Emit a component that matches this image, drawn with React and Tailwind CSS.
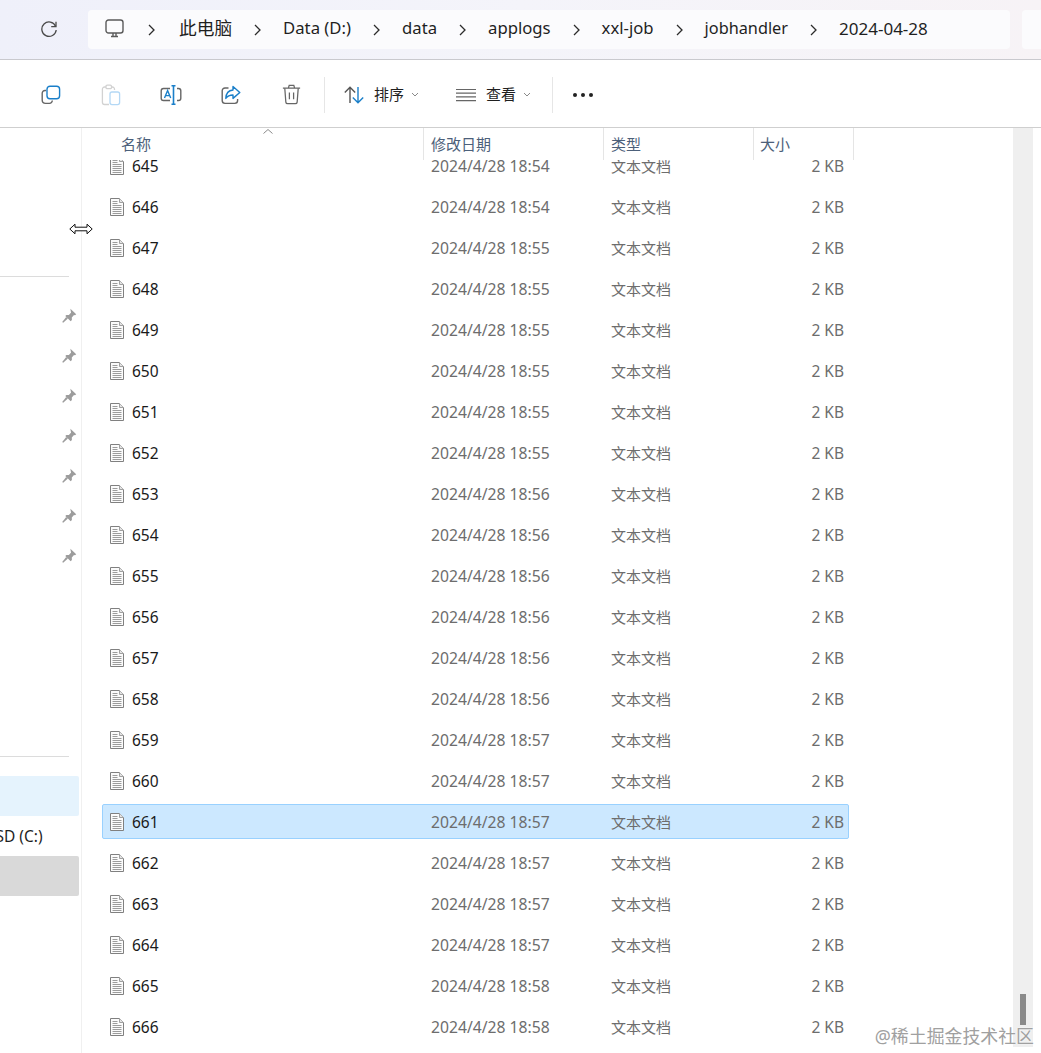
import React from "react";

const crumbs = ["此电脑", "Data (D:)", "data", "applogs", "xxl-job", "jobhandler", "2024-04-28"];

// name range -> time
function timeFor(n) {
  if (n <= 646) return "18:54";
  if (n <= 652) return "18:55";
  if (n <= 658) return "18:56";
  if (n <= 664) return "18:57";
  return "18:58";
}

const rows = [];
for (let n = 645; n <= 666; n++) rows.push(n);

const pins = [0, 1, 2, 3, 4, 5, 6];

function Chevron() {
  return (
    <svg width="7" height="12" viewBox="0 0 7 12" fill="none" stroke="#2b2b2b" strokeWidth="1.3" className="shrink-0">
      <path d="M1 1l5 5-5 5" />
    </svg>
  );
}

function SmallChevron() {
  return (
    <svg width="8" height="5" viewBox="0 0 8 5" fill="none" stroke="#8a8a8a" strokeWidth="1">
      <path d="M1 1l3 3 3-3" />
    </svg>
  );
}

function DocIcon() {
  return (
    <svg width="14" height="18" viewBox="0 0 14 18" fill="none" className="shrink-0">
      <path d="M.5.5h9l4 4v13H.5z" fill="#fbfbfb" stroke="#808080" />
      <path d="M9.5.5v4h4" fill="#e4e4e4" stroke="#a0a0a0" />
      <path d="M2.5 3.5h5M2.5 5.5h5M2.5 7.5h9M2.5 9.5h9M2.5 11.5h9M2.5 13.5h9M2.5 15.5h9" stroke="#9c9c9c" />
    </svg>
  );
}

function PinIcon() {
  return (
    <svg width="16" height="16" viewBox="0 0 16 16" fill="#9c9c9c">
      <path d="M9.4.8l5.8 5.4-1.2 1.1-1-.3-2.2 2.6.1 2.4-1.2 1.2-5.4-5.1 1.1-1.2 2.5.1 2.2-2.6-.4-1.3z" />
      <path d="M5.2 9l1.7 1.6-4.7 4.2-1-.9z" />
    </svg>
  );
}

function ToolBtn({ children }) {
  return <div className="w-[60px] h-full flex items-center justify-center shrink-0">{children}</div>;
}

function Header() {
  const cell = "h-full flex items-center border-r border-[#e5e5e5] text-[15px] text-[#4c607a] shrink-0";
  return (
    <div className="h-[32px] flex shrink-0">
      <div className={`${cell} w-[342px] pl-[39px] relative`}>
        名称
        <svg width="10" height="5" viewBox="0 0 10 5" fill="none" stroke="#8a8a8a" className="absolute left-[181px] top-[1px]">
          <path d="M.5 4.5L5 .5l4.5 4" />
        </svg>
      </div>
      <div className={`${cell} w-[180px] pl-[7px]`}>修改日期</div>
      <div className={`${cell} w-[150px] pl-[7px]`}>类型</div>
      <div className={`${cell} w-[100px] pl-[6px]`}>大小</div>
    </div>
  );
}

function Row({ n }) {
  const selected = n === 661;
  return (
    <div
      className={`w-[747px] h-[35px] mb-[6px] shrink-0 flex items-center border rounded-[2px] ${
        selected ? "bg-[#cce8ff] border-[#99d1ff]" : "border-transparent"
      }`}
    >
      <div className="w-[328px] flex items-center shrink-0 pl-[7px] gap-[8px] text-[#1a1a1a]">
        <DocIcon />
        <span className="text-[15.5px] pt-[2px]">{n}</span>
      </div>
      <div className="w-[180px] shrink-0 pt-[2px] text-[15.7px] text-[#6d6d6d]">2024/4/28 {timeFor(n)}</div>
      <div className="w-[150px] shrink-0 pt-[2px] text-[15px] text-[#6d6d6d]">文本文档</div>
      <div className="flex-1 text-right pt-[2px] pr-[4px] text-[15.5px] text-[#6d6d6d]">2 KB</div>
    </div>
  );
}

export default function App() {
  return (
    <div
      className="relative w-[1041px] h-[1053px] overflow-hidden bg-white flex flex-col"
      style={{ fontFamily: '"Noto Sans", "Noto Sans CJK SC", sans-serif' }}
    >
      {/* Address bar */}
      <div className="h-[60px] shrink-0 flex items-center border-b border-[#c9c9ce] bg-gradient-to-r from-[#eff0fa] via-[#f4f4fa] to-[#f7f3f6]">
        <div className="w-[88px] shrink-0 flex justify-center pl-[10px] pb-[2px]">
          <svg width="18" height="18" viewBox="0 0 18 18" fill="none" stroke="#4a4a4a" strokeWidth="1.3">
            <path d="M15.6 6.2A7.2 7.2 0 1 0 16.2 10" />
            <path d="M16 1.8v4.8h-4.8" />
          </svg>
        </div>
        <div className="w-[922px] h-[39px] shrink-0 rounded-[4px] bg-[#fbfbfd] flex items-center pl-[17px] gap-[22px] text-[#1f1f1f]">
          <svg width="19" height="19" viewBox="0 0 19 19" fill="none" stroke="#5a5a5a" strokeWidth="1.4" className="shrink-0 mr-[2px] mb-[2px]">
            <rect x="1" y="1" width="17" height="13" rx="2.5" />
            <path d="M6 17.5h7M8 14v3M11 14v3" />
          </svg>
          {crumbs.map((c, i) => (
            <React.Fragment key={c}>
              <Chevron />
              <span
                className={`leading-none whitespace-nowrap pb-[2px] ${
                  i === 0 ? "text-[17.7px] ml-[2px]" : i === 6 ? "text-[17px]" : i === 5 ? "text-[16.3px]" : "text-[16.7px]"
                }`}
              >
                {c}
              </span>
            </React.Fragment>
          ))}
        </div>
        <div className="ml-[12px] flex-1 h-[39px] rounded-l-[4px] bg-[#fbfbfd]" />
      </div>

      {/* Command bar */}
      <div className="h-[68px] shrink-0 flex items-center border-b border-[#cfcfcf] pl-[21px] pt-[2px]">
        <ToolBtn>
          <svg width="20" height="20" viewBox="0 0 20 20" fill="none" strokeWidth="1.4">
            <path d="M5.2 5.5H4A2.8 2.8 0 0 0 1.2 8.3V15A3.4 3.4 0 0 0 4.6 18.4H8.5A2.8 2.8 0 0 0 11.3 15.6" stroke="#666" />
            <rect x="6" y="1.2" width="12.6" height="12.6" rx="3" stroke="#1a7fc9" />
          </svg>
        </ToolBtn>
        <ToolBtn>
          <svg width="20" height="22" viewBox="0 0 20 22" fill="none" strokeWidth="1.3">
            <path d="M5 3H3.6A2.2 2.2 0 0 0 1.4 5.2V18.3A2.2 2.2 0 0 0 3.6 20.5H8M13.5 6V5.2A2.2 2.2 0 0 0 11.3 3H10" stroke="#d2d2d2" />
            <rect x="5" y="1.2" width="5.5" height="3.4" rx="1.2" stroke="#d2d2d2" />
            <rect x="9" y="8" width="9.6" height="12.6" rx="2" stroke="#b4d8f5" />
          </svg>
        </ToolBtn>
        <ToolBtn>
          <svg width="22" height="20" viewBox="0 0 22 20" fill="none" strokeWidth="1.4">
            <path d="M10 3.5H3.5A2.3 2.3 0 0 0 1.2 5.8V13.2A2.3 2.3 0 0 0 3.5 15.5H10M17 3.5H18.5A2.3 2.3 0 0 1 20.8 5.8V13.2A2.3 2.3 0 0 1 18.5 15.5H17" stroke="#666" />
            <path d="M4.5 13L7.6 5.5 10.7 13M5.6 10.6h4.2" stroke="#1a7fc9" />
            <path d="M13.5 .8V19.2M11.5 .8h4M11.5 19.2h4" stroke="#1a7fc9" strokeWidth="1.6" />
          </svg>
        </ToolBtn>
        <ToolBtn>
          <svg width="20" height="20" viewBox="0 0 20 20" fill="none" strokeWidth="1.4">
            <path d="M7.5 3H4A2.8 2.8 0 0 0 1.2 5.8V15.6A2.8 2.8 0 0 0 4 18.4H13.8A2.8 2.8 0 0 0 16.6 15.6V14" stroke="#666" />
            <path d="M12 1.4L18.8 7.5 12 13.4V10C9 10 6.6 10.8 4.8 13.4 5 8.6 7.6 5.4 12 5z" stroke="#1a7fc9" strokeLinejoin="round" />
          </svg>
        </ToolBtn>
        <ToolBtn>
          <svg width="19" height="21" viewBox="0 0 18 20" fill="none" stroke="#666" strokeWidth="1.2">
            <path d="M.8 4h16.4M6 4L6.8 1.2h4.4L12 4" />
            <path d="M2.6 4l1 13.2a1.8 1.8 0 0 0 1.8 1.6h7.2a1.8 1.8 0 0 0 1.8-1.6l1-13.2" />
            <path d="M7 8v6.5M11 8v6.5" />
          </svg>
        </ToolBtn>
        <div className="w-px h-[36px] bg-[#e6e6e6] ml-[3px] shrink-0" />
        <div className="ml-[19px] flex items-center shrink-0">
          <svg width="20" height="18" viewBox="0 0 20 18" fill="none" strokeWidth="1.4" className="shrink-0">
            <path d="M6 17V1.5M.8 6.5L6 1.3l5.2 5.2" stroke="#555" />
            <path d="M14 1v15.5M8.8 11.5L14 16.7l5.2-5.2" stroke="#1a7fc9" />
          </svg>
          <span className="ml-[10px] text-[15px] text-[#1f1f1f] leading-none">排序</span>
          <span className="ml-[7px] flex"><SmallChevron /></span>
        </div>
        <div className="ml-[37px] flex items-center shrink-0">
          <svg width="20" height="14" viewBox="0 0 20 14" fill="none" stroke="#666" strokeWidth="1.2" className="shrink-0">
            <path d="M0 1.5h20M0 5.2h20M0 8.9h20M0 12.6h20" />
          </svg>
          <span className="ml-[10px] text-[15px] text-[#1f1f1f] leading-none">查看</span>
          <span className="ml-[7px] flex"><SmallChevron /></span>
        </div>
        <div className="w-px h-[36px] bg-[#e6e6e6] ml-[21px] shrink-0" />
        <div className="ml-[20px] flex gap-[4px] shrink-0">
          <span className="w-[4px] h-[4px] rounded-full bg-[#222]" />
          <span className="w-[4px] h-[4px] rounded-full bg-[#222]" />
          <span className="w-[4px] h-[4px] rounded-full bg-[#222]" />
        </div>
      </div>

      {/* Body */}
      <div className="flex-1 min-h-0 flex">
        {/* Nav pane */}
        <aside className="w-[82px] shrink-0 border-r border-[#f0f0f0] flex flex-col overflow-hidden">
          <div className="h-px w-[69px] bg-[#dcdcdc] mt-[148px] mb-[19px] shrink-0" />
          {pins.map(p => (
            <div key={p} className="h-[40px] w-[77px] shrink-0 flex items-center justify-end">
              <PinIcon />
            </div>
          ))}
          <div className="h-px w-[69px] bg-[#dcdcdc] mt-[180px] mb-[19px] shrink-0" />
          <div className="h-[40px] w-[79px] shrink-0 bg-[#e5f3fd] rounded-r-[2px]" />
          <div className="h-[40px] w-[79px] shrink-0 flex items-center pt-[2px] text-[15.5px] text-[#1f1f1f] whitespace-nowrap">
            <span className="-ml-[13px]">SSD (C:)</span>
          </div>
          <div className="h-[40px] w-[79px] shrink-0 bg-[#d9d9d9] rounded-r-[2px]" />
        </aside>

        {/* File list */}
        <main className="flex-1 min-w-0 flex">
          <div className="w-[931px] shrink-0 flex flex-col overflow-hidden">
            <Header />
            <div className="flex-1 min-h-0 overflow-hidden">
              <div className="pl-[20px] -mt-[12px] flex flex-col">
                {rows.map(n => <Row key={n} n={n} />)}
              </div>
            </div>
          </div>
          <div className="w-[20px] shrink-0 mb-[6px] bg-[#efefef] flex flex-col justify-end items-center pb-[22px]">
            <div className="w-[6px] h-[31px] bg-[#8a8a8a]" />
          </div>
        </main>
      </div>

      {/* Resize cursor */}
      <svg width="24" height="12" viewBox="0 0 24 12" className="absolute left-[69px] top-[223px]" fill="#fff" stroke="#111" strokeWidth="1">
        <path d="M.8 6L6 1.2v3h12v-3L23.2 6 18 10.8v-3H6v3z" />
      </svg>

      {/* Watermark */}
      <div className="absolute right-[7px] bottom-[7px] text-[17.9px] leading-none text-[#a0a0a0] [text-shadow:0_0_2px_#fff] whitespace-nowrap">
        @稀土掘金技术社区
      </div>
    </div>
  );
}
